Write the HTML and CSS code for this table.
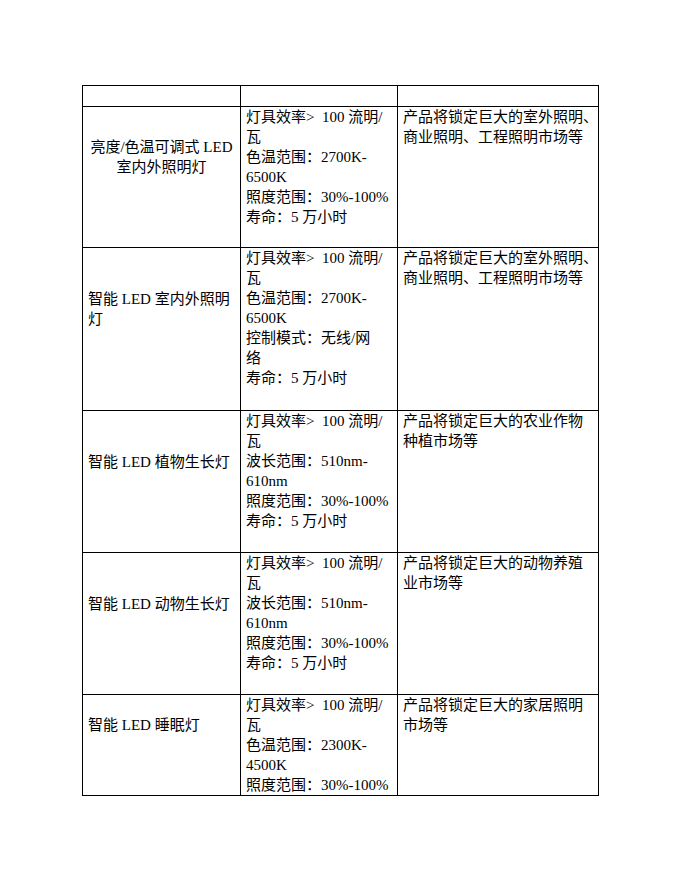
FILE: index.html
```html
<!DOCTYPE html>
<html lang="zh-CN">
<head>
<meta charset="utf-8">
<title>LED 产品表</title>
<link rel="stylesheet" href="styles.css">
</head>
<body>
<div class="page">
  <div class="grid">
    <div class="cell"></div>
    <div class="cell"></div>
    <div class="cell"></div>

    <div class="cell name center"><div>亮度/色温可调式 LED<br>室内外照明灯</div></div>
    <div class="cell spec">灯具效率&gt;&nbsp; 100 流明/<br>瓦<br>色温范围：2700K-<br>6500K<br>照度范围：30%-100%<br>寿命：5 万小时</div>
    <div class="cell market">产品将锁定巨大的室外照明、<br>商业照明、工程照明市场等</div>

    <div class="cell name"><div>智能 LED 室内外照明<br>灯</div></div>
    <div class="cell spec">灯具效率&gt;&nbsp; 100 流明/<br>瓦<br>色温范围：2700K-<br>6500K<br>控制模式：无线/网<br>络<br>寿命：5 万小时</div>
    <div class="cell market">产品将锁定巨大的室外照明、<br>商业照明、工程照明市场等</div>

    <div class="cell name"><div>智能 LED 植物生长灯</div></div>
    <div class="cell spec">灯具效率&gt;&nbsp; 100 流明/<br>瓦<br>波长范围：510nm-<br>610nm<br>照度范围：30%-100%<br>寿命：5 万小时</div>
    <div class="cell market">产品将锁定巨大的农业作物<br>种植市场等</div>

    <div class="cell name"><div>智能 LED 动物生长灯</div></div>
    <div class="cell spec">灯具效率&gt;&nbsp; 100 流明/<br>瓦<br>波长范围：510nm-<br>610nm<br>照度范围：30%-100%<br>寿命：5 万小时</div>
    <div class="cell market">产品将锁定巨大的动物养殖<br>业市场等</div>

    <div class="cell name"><div>智能 LED 睡眠灯</div></div>
    <div class="cell spec">灯具效率&gt;&nbsp; 100 流明/<br>瓦<br>色温范围：2300K-<br>4500K<br>照度范围：30%-100%</div>
    <div class="cell market">产品将锁定巨大的家居照明<br>市场等</div>
  </div>
</div>
</body>
</html>
```
FILE: styles.css
```css
html, body {
  margin: 0;
  padding: 0;
  background: #ffffff;
}

body {
  font-family: "Liberation Serif", "Noto Sans CJK SC", serif;
  font-size: 15px;
  line-height: 20px;
  color: #000000;
}

.page {
  padding: 85px 0 0 82px;
}

.grid {
  display: grid;
  grid-template-columns: 158px 157px 201px;
  grid-template-rows: 21px 141px 163px 142px 142px 101px;
  width: 517px;
  box-sizing: border-box;
  border-top: 1px solid #000;
  border-left: 1px solid #000;
}

.cell {
  box-sizing: border-box;
  border-right: 1px solid #000;
  border-bottom: 1px solid #000;
  padding: 0 5px;
  white-space: nowrap;
  overflow: visible;
}

.name {
  display: flex;
  flex-direction: column;
  justify-content: center;
  padding-bottom: 40px;
}

.name-last {
  padding-bottom: 46px;
}

.center {
  text-align: center;
}
```
